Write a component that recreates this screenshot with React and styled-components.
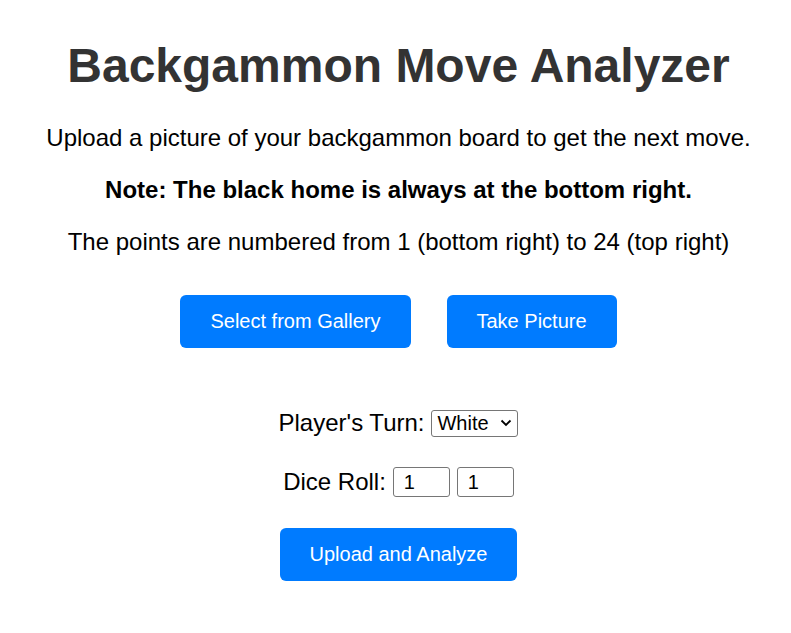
import React from 'react'
import styled, { createGlobalStyle } from 'styled-components'

const GlobalStyle = createGlobalStyle`
  body {
    margin: 0;
    font-family: "Liberation Sans", Arial, sans-serif;
    background: #fff;
  }
`

const Page = styled.div`
  text-align: center;
  padding: 38px 17px 20px 23px;
`

const Title = styled.h1`
  font-size: 48px;
  font-weight: 700;
  color: #333;
  margin: 0 0 31px;
`

const Text = styled.p`
  font-size: 24px;
  line-height: 28px;
  color: #000;
  margin: 0 0 24px;
  font-weight: ${(p) => (p.bold ? 700 : 400)};
`

const ButtonRow = styled.div`
  display: flex;
  justify-content: center;
  gap: 36px;
  margin: 39px 0 61px;
`

const Button = styled.button`
  background: #007bff;
  color: #fff;
  border: none;
  border-radius: 6px;
  font-family: "Liberation Sans", Arial, sans-serif;
  font-size: 20px;
  line-height: 23px;
  padding: 15px 30px;
  cursor: pointer;
`

const Field = styled.div`
  display: flex;
  justify-content: center;
  align-items: center;
  gap: 7px;
  font-size: 24px;
  height: ${(p) => p.height}px;
  margin-bottom: ${(p) => p.gapBelow}px;
`

const SelectWrap = styled.span`
  position: relative;
  display: inline-flex;
`

const Select = styled.select`
  appearance: none;
  box-sizing: border-box;
  width: 87px;
  height: 27px;
  font-family: "Liberation Sans", Arial, sans-serif;
  font-size: 20px;
  color: #000;
  background: #fff;
  padding: 0 0 0 5px;
  border: 1px solid #767676;
  border-radius: 3px;
`

const Chevron = styled.svg`
  position: absolute;
  right: 6px;
  top: 9px;
  pointer-events: none;
`

const NumberInput = styled.input`
  box-sizing: border-box;
  width: 57px;
  height: 30px;
  font-family: "Liberation Sans", Arial, sans-serif;
  font-size: 20px;
  color: #000;
  padding: 0 10px;
  border: 1px solid #767676;
  border-radius: 3px;
  -moz-appearance: textfield;
  &::-webkit-inner-spin-button,
  &::-webkit-outer-spin-button {
    -webkit-appearance: none;
    margin: 0;
  }
`

const App = () => {
  return (
    <Page>
      <GlobalStyle />
      <Title>Backgammon Move Analyzer</Title>
      <Text>Upload a picture of your backgammon board to get the next move.</Text>
      <Text bold>Note: The black home is always at the bottom right.</Text>
      <Text>The points are numbered from 1 (bottom right) to 24 (top right)</Text>

      <ButtonRow>
        <Button>Select from Gallery</Button>
        <Button>Take Picture</Button>
      </ButtonRow>

      <Field height={28} gapBelow={30}>
        Player's Turn:
        <SelectWrap>
          <Select defaultValue='white'>
            <option value='white'>White</option>
            <option value='black'>Black</option>
          </Select>
          <Chevron width='12' height='8' viewBox='0 0 12 8'>
            <path d='M1.5 1.5 L6 6 L10.5 1.5' fill='none' stroke='#000' strokeWidth='1.8' />
          </Chevron>
        </SelectWrap>
      </Field>
      <Field height={30} gapBelow={31}>
        Dice Roll:
        <NumberInput type='number' defaultValue={1} min={1} max={6} />
        <NumberInput type='number' defaultValue={1} min={1} max={6} />
      </Field>

      <Button>Upload and Analyze</Button>
    </Page>
  )
}

export default App
